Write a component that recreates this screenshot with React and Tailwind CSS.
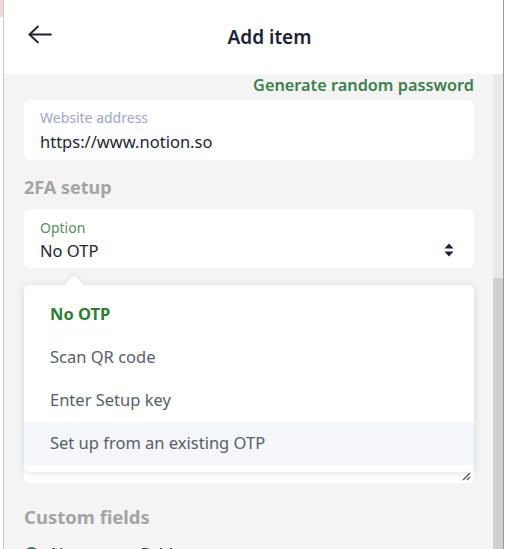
import React, { useState } from 'react';

const options = ['No OTP', 'Scan QR code', 'Enter Setup key', 'Set up from an existing OTP'];

const BackArrow = () => (
  <svg width="24" height="19" viewBox="0 0 24 19" fill="none" stroke="#1c2233" strokeWidth="1.8" strokeLinecap="round" strokeLinejoin="round">
    <path d="M1.5 9.5H23" />
    <path d="M10 1.5 1.5 9.5 10 17.5" />
  </svg>
);

const SortCaret = () => (
  <svg width="10" height="14" viewBox="0 0 10 14" fill="#16213e">
    <path d="M5 0.5 9.5 5.5H0.5Z" />
    <path d="M0.5 8.5H9.5L5 13.5Z" />
  </svg>
);

const ResizeGrip = () => (
  <svg width="9" height="9" viewBox="0 0 9 9" stroke="#555" strokeWidth="1.2">
    <path d="M1 8 8 1" />
    <path d="M5 8 8 5" />
  </svg>
);

const App = () => {
  const [selected, setSelected] = useState('No OTP');
  const [hovered, setHovered] = useState('Set up from an existing OTP');

  return (
    <div className="flex h-[549px] w-[506px] overflow-hidden bg-white font-['Noto_Sans',sans-serif]">
      {/* edge of the page underneath */}
      <div className="w-[4px] shrink-0 border-r border-[#c9c9c9]">
        <div className="h-[17px] bg-[#f1d6dc]" />
      </div>

      <div className="flex min-w-0 flex-1 flex-col">
        {/* Header */}
        <div className="flex h-[74px] shrink-0 items-center pl-[24px] pr-[10px]">
          <button className="mt-[-6px] flex h-[24px] w-[26px] items-center">
            <BackArrow />
          </button>
          <h1 className="flex-1 pr-[8px] text-center text-[19px] font-semibold text-[#1c2233]">Add item</h1>
        </div>

        <div className="flex min-h-0 flex-1">
          {/* Form */}
          <div className="flex-1 bg-[#f4f4f4] pl-[20px] pr-[19px]">
            <div className="flex h-[26px] items-center justify-end pb-[3px]">
              <button className="text-[16.3px] font-semibold text-[#3d7f4e]">Generate random password</button>
            </div>

            <div className="h-[60px] rounded-md bg-white px-[16px] pt-[8px]">
              <div className="text-[14px] leading-[20px] text-[#9ea5c8]">Website address</div>
              <div className="mt-[2px] text-[16.5px] leading-[24px] text-[#1f2433]">https://www.notion.so</div>
            </div>

            <h2 className="mt-[14px] text-[18px] font-bold leading-[26px] text-[#a4a4a4]">2FA setup</h2>

            <div className="relative mt-[9px]">
              <div className="flex h-[59px] items-center rounded-md bg-white pl-[16px] pr-[20px]">
                <div className="flex-1 pt-[3px]">
                  <div className="text-[14px] leading-[20px] text-[#5c8a62]">Option</div>
                  <div className="mt-[1px] text-[16.5px] leading-[24px] text-[#1f2433]">{selected}</div>
                </div>
                <div className="mt-[22px]">
                  <SortCaret />
                </div>
              </div>

              {/* Options menu */}
              <div className="absolute left-0 right-0 top-[76px] z-10 rounded-md bg-white pb-[7px] pt-[8px] shadow-[0_1px_8px_rgba(0,0,0,0.12)]">
                <div className="absolute left-[43px] top-[-7px] h-[14px] w-[14px] rotate-45 rounded-[2px] bg-white shadow-[-2px_-2px_4px_rgba(0,0,0,0.05)]" />
                {options.map(opt => (
                  <div
                    key={opt}
                    onClick={() => setSelected(opt)}
                    onMouseEnter={() => setHovered(opt)}
                    className={`relative flex h-[43px] items-center px-[26px] text-[16.5px] ${
                      opt === selected ? 'font-bold text-[#2e7d32]' : 'text-[#585e69]'
                    } ${opt === hovered ? 'bg-[#f4f6fa]' : ''}`}
                  >
                    {opt}
                  </div>
                ))}
              </div>
            </div>

            {/* Notes textarea under the menu */}
            <div className="relative mt-[17px] h-[198px] rounded-md bg-white">
              <div className="absolute bottom-[2px] right-[3px]">
                <ResizeGrip />
              </div>
            </div>

            <h2 className="mt-[21px] text-[18.5px] font-bold leading-[26px] text-[#a4a4a4]">Custom fields</h2>

            <label className="mt-[12px] flex items-center gap-[12px] text-[16.5px] leading-[24px] text-[#1f2433]">
              <span className="h-[15px] w-[15px] rounded-full border-2 border-[#3d7f4e]" />
              No custom fields
            </label>
          </div>

          {/* Scrollbar */}
          <div className="flex w-[10px] shrink-0 flex-col bg-[#e9e9e9]">
            <div className="h-[204px]" />
            <div className="flex-1 bg-[#d0d0d0]" />
          </div>
        </div>
      </div>

      <div className="w-[3px] shrink-0 border-l border-[#9a9a9a]" />
    </div>
  );
};

export default App;
